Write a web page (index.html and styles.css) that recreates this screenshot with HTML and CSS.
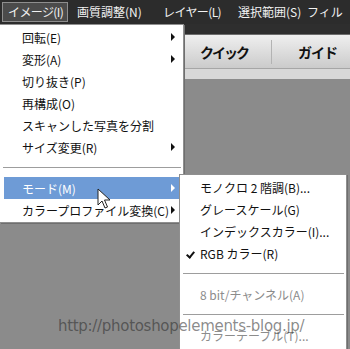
FILE: index.html
```html
<!DOCTYPE html>
<html lang="ja">
<head>
<meta charset="utf-8">
<link rel="stylesheet" href="styles.css">
</head>
<body>
<div class="app">
  <nav class="menubar">
    <span class="mb-item active narrow">イメージ(I)</span>
    <span class="mb-item">画質調整(N)</span>
    <span class="mb-item narrow">レイヤー(L)</span>
    <span class="mb-item">選択範囲(S)</span>
    <span class="mb-item">フィル</span>
  </nav>
  <div class="strip"></div>
  <div class="toolbar">
    <span class="tab tab-quick">クイック</span>
    <span class="tab-sep"></span>
    <span class="tab tab-guide">ガイド</span>
  </div>
  <div class="band"></div>
  <div class="workspace"></div>

  <ul class="menu menu-main">
    <li class="item"><span>回転(E)</span><i class="arrow"></i></li>
    <li class="item"><span>変形(A)</span><i class="arrow"></i></li>
    <li class="item"><span>切り抜き(P)</span></li>
    <li class="item"><span>再構成(O)</span></li>
    <li class="item"><span>スキャンした写真を分割</span></li>
    <li class="item"><span>サイズ変更(R)</span><i class="arrow"></i></li>
    <li class="sep"></li>
    <li class="item hl"><span>モード(M)</span><i class="arrow"></i></li>
    <li class="item"><span>カラープロファイル変換(C)</span><i class="arrow"></i></li>
  </ul>

  <ul class="menu menu-sub">
    <li class="item"><span>モノクロ 2 階調(B)...</span></li>
    <li class="item"><span>グレースケール(G)</span></li>
    <li class="item"><span>インデックスカラー(I)...</span></li>
    <li class="item checked"><span>RGB カラー(R)</span></li>
    <li class="sep"></li>
    <li class="item disabled"><span>8 bit/チャンネル(A)</span></li>
    <li class="sep"></li>
    <li class="item disabled"><span>カラーテーブル(T)...</span></li>
  </ul>

  <svg class="pointer" width="14" height="22" viewBox="0 0 14 22">
    <path d="M1 1 L1 17 L5 13 L8 20 L10.5 19 L7.5 12 L13 12 Z" fill="#fff" stroke="#222" stroke-width="1" stroke-linejoin="round"/>
  </svg>

  <div class="watermark">http://photoshopelements-blog.jp/</div>
</div>
</body>
</html>
```

FILE: styles.css
```css
* { box-sizing: border-box; }
html, body { margin: 0; padding: 0; }
body {
  width: 350px;
  height: 349px;
  overflow: hidden;
  background: #8b8b8b;
  font-family: "Noto Sans CJK JP", "Noto Sans", sans-serif;
}
.app {
  position: relative;
  width: 350px;
  height: 349px;
  display: flex;
  flex-direction: column;
}
.menubar {
  height: 24px;
  background: #2c2c2c;
  display: grid;
  grid-template-columns: 69px 86px 75px 69px 1fr;
  padding-left: 2px;
  align-items: center;
  color: #f2f2f2;
  font-size: 12px;
  white-space: nowrap;
}
.mb-item {
  padding-left: 6px;
  line-height: 19px;
  height: 20px;
}
.mb-item.narrow { letter-spacing: -0.6px; }
.mb-item.active {
  width: 66px;
  background: #4b4b4b;
  border: 1px solid #8e8e8e;
  padding-left: 5px;
  line-height: 18px;
}
.strip {
  height: 11px;
  background: #2e2e2e;
  border-bottom: 1px solid #6c6c6c;
}
.toolbar {
  height: 34px;
  background: linear-gradient(#efefef, #cbcbcb);
  border-bottom: 1px solid #a6a6a6;
  display: flex;
  align-items: center;
  padding-left: 200px;
}
.tab {
  font-weight: bold;
  font-size: 14px;
  color: #111;
}
.tab-quick { letter-spacing: -2px; }
.tab-guide { letter-spacing: -1px; }
.tab-sep {
  width: 1px;
  height: 24px;
  background: #b3b3b3;
  margin: 0 26px 0 23px;
}
.band {
  height: 10px;
  background: #d8d8d8;
}
.workspace {
  flex: 1;
  background: #8b8b8b;
}

.menu {
  position: absolute;
  margin: 0;
  list-style: none;
  background: #fff;
  border: 1px solid #8f8f8f;
  font-size: 12px;
  color: #111;
}
.menu-main {
  left: 0;
  top: 24px;
  width: 184px;
  height: 199px;
  padding: 1px 0 0 0;
  border-left: none;
  box-shadow: 1px 1px 0 #6f6f6f;
}
.menu-sub {
  left: 179px;
  top: 174px;
  width: 168px;
  height: 190px;
  padding: 1px 0 0 0;
  box-shadow: 1px 1px 0 #6f6f6f;
}
.item {
  height: 22px;
  display: flex;
  align-items: center;
  justify-content: space-between;
  padding: 0 8px 0 22px;
  white-space: nowrap;
  position: relative;
}
.menu-sub .item { padding-left: 20px; }
.item.hl {
  background: #6e9bd6;
  color: #fff;
  margin: 0 4px 0 4px;
  padding-left: 18px;
  padding-right: 4px;
}
.item.disabled { color: #8c8c8c; }
.item.checked::before {
  content: "";
  position: absolute;
  left: 8px;
  top: 8px;
  width: 3px;
  height: 6px;
  border: solid #111;
  border-width: 0 2px 2px 0;
  transform: rotate(40deg);
}
.sep {
  height: 19px;
  position: relative;
}
.sep::after {
  content: "";
  position: absolute;
  left: 3px;
  right: 2px;
  top: 9px;
  height: 1px;
  background: #9d9d9d;
}
.arrow {
  width: 0;
  height: 0;
  border-top: 4px solid transparent;
  border-bottom: 4px solid transparent;
  border-left: 4px solid #111;
}
.hl .arrow { border-left-color: #fff; }

.pointer {
  position: absolute;
  left: 97px;
  top: 188px;
}
.watermark {
  position: absolute;
  left: 58px;
  top: 317px;
  font-family: "DejaVu Sans", sans-serif;
  font-size: 15px;
  color: rgba(40, 40, 40, 0.55);
  white-space: nowrap;
  letter-spacing: -0.3px;
}
```
